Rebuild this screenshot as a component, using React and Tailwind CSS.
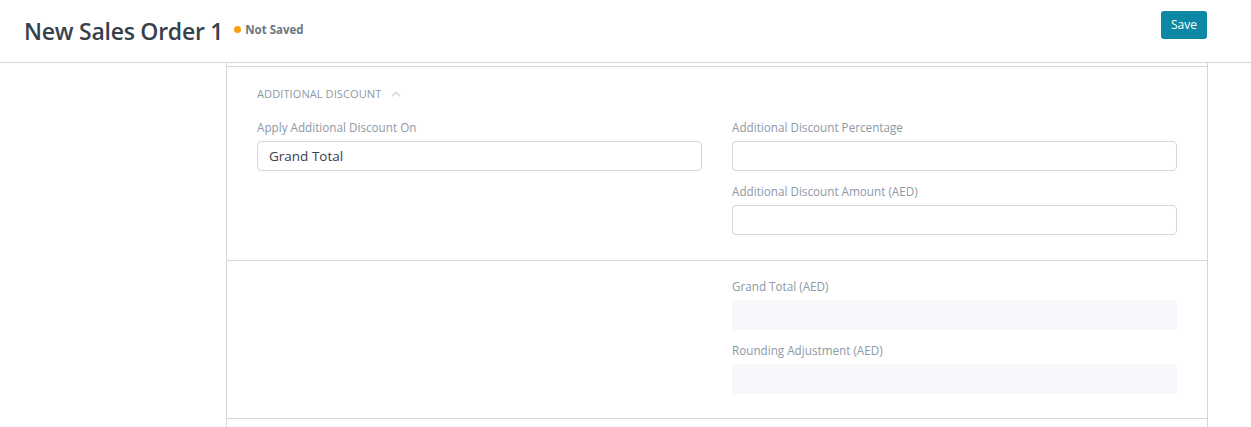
import { ChevronUp } from "lucide-react";

const font = { fontFamily: '"Open Sans", "Noto Sans", sans-serif' };

function Field({ label, value, readOnly }) {
  return (
    <div className="flex flex-col">
      <label className="text-[11.7px] leading-[18px] text-[#8d99a6] mb-[5px]">{label}</label>
      <div
        className={`h-[30px] rounded-[4px] px-[11px] flex items-center text-[13.5px] text-[#36414c] ${
          readOnly ? "bg-[#f5f7fa]" : "bg-white border border-[#d1d8dd]"
        }`}
      >
        {value}
      </div>
    </div>
  );
}

export default function App() {
  return (
    <div className="min-h-screen bg-white" style={font}>
      {/* Page head */}
      <div className="h-[63px] border-b border-[#d1d8dd] flex items-center justify-between pl-[24px] pr-[44px]">
        <div className="flex items-center gap-[11px]">
          <h1 className="text-[23px] font-semibold text-[#36414c] tracking-[-0.25px]">New Sales Order 1</h1>
          <div className="flex items-center gap-[4px] mt-[-3px]">
            <span className="w-[7px] h-[7px] rounded-full bg-[#ff9f0f]" />
            <span className="text-[11.5px] font-bold text-[#6c7680]">Not Saved</span>
          </div>
        </div>
        <button className="h-[28px] px-[10px] rounded-[3px] bg-[#0c88a5] text-white text-[12px] mt-[-12px]">
          Save
        </button>
      </div>

      {/* Form card */}
      <div className="ml-[226px] w-[982px] border-x border-[#d1d8dd] pt-[3px]">
        <div className="border-t border-[#d1d8dd] px-[30px] pt-[18px] pb-[25px]">
          <div className="flex items-center gap-[8px] h-[18px] mb-[15px]">
            <span className="text-[11px] uppercase text-[#8d99a6] tracking-[0.1px]">Additional Discount</span>
            <ChevronUp size={14} strokeWidth={2.5} className="text-[#d1d8dd]" />
          </div>
          <div className="grid grid-cols-2 gap-[30px]">
            <div className="flex flex-col gap-[11px]">
              <Field label="Apply Additional Discount On" value="Grand Total" />
            </div>
            <div className="flex flex-col gap-[11px]">
              <Field label="Additional Discount Percentage" />
              <Field label="Additional Discount Amount (AED)" />
            </div>
          </div>
        </div>
        <div className="border-t border-[#d1d8dd] px-[30px] pt-[16px] pb-[24px]">
          <div className="grid grid-cols-2 gap-[30px]">
            <div />
            <div className="flex flex-col gap-[11px]">
              <Field label="Grand Total (AED)" readOnly />
              <Field label="Rounding Adjustment (AED)" readOnly />
            </div>
          </div>
        </div>
        <div className="border-t border-[#d1d8dd] h-[20px]" />
      </div>
    </div>
  );
}
